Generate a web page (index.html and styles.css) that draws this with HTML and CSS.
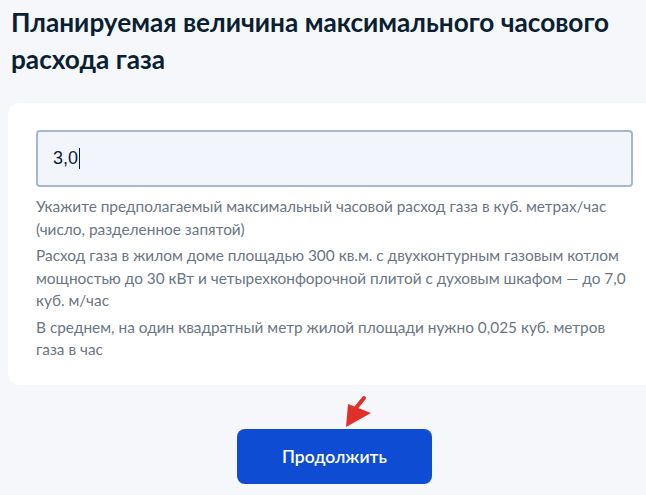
FILE: index.html
```html
<!DOCTYPE html>
<html lang="ru">
<head>
    <meta charset="UTF-8">
    <meta name="viewport" content="width=device-width, initial-scale=1.0">
    <title>Расход газа</title>
    <link rel="stylesheet" href="styles.css">
</head>
<body>
<div class="page">
    <h1>Планируемая величина максимального часового расхода газа</h1>
    <div class="card">
        <div class="field">
            <span class="value">3,0</span><span class="caret"></span>
        </div>
        <p class="hint">Укажите предполагаемый максимальный часовой расход газа в куб. метрах/час (число, разделенное запятой)</p>
        <p class="hint">Расход газа в жилом доме площадью 300 кв.м. с двухконтурным газовым котлом мощностью до 30 кВт и четырехконфорочной плитой с духовым шкафом — до 7,0 куб. м/час</p>
        <p class="hint">В среднем, на один квадратный метр жилой площади нужно 0,025 куб. метров газа в час</p>
    </div>
    <div class="actions">
        <svg class="arrow" width="30" height="34" viewBox="0 0 30 34">
            <path d="M20 4 L11 15" stroke="#e0302a" stroke-width="4" stroke-linecap="round"/>
            <polygon points="4,10 27,19 2,33" fill="#e0302a"/>
        </svg>
        <button class="next-btn" type="button">Продолжить</button>
    </div>
</div>
</body>
</html>
```

FILE: styles.css
```css
html, body { margin:0; padding:0; }
body { background:#f5f7fa; font-family: Lato, "Noto Sans", sans-serif; overflow:hidden; }
.page { width:653px; margin-left:8px; }
h1 { margin:0; max-width:625px; padding:4px 0 0 3px; font-size:26.2px; line-height:37px; font-weight:700; color:#0b1f33; }
.card { margin-top:25px; background:#fff; border-radius:12px; padding:27px 28px 24px; }
.field { height:53px; border:2px solid #a9b7cc; border-radius:4px; background:#f2f5fb; display:flex; align-items:center; padding:0 15px; }
.value { font-family:"Liberation Sans", Arial, sans-serif; font-size:18px; color:#0b1f33; }
.caret { width:1px; height:21px; background:#0b1f33; margin-left:1px; }
.hint { margin:4px 0 0; font-size:15.4px; line-height:22.5px; color:#6b7683; }
.field + .hint { margin-top:8px; }
.actions { position:relative; display:flex; justify-content:center; padding-top:44px; }
.arrow { position:absolute; left:336px; top:9px; }
.next-btn { width:195px; height:55px; border:none; border-radius:8px; background:#0d4cd3; color:#fff; font-family:Lato, sans-serif; font-size:17.5px; font-weight:600; cursor:pointer; }
```
